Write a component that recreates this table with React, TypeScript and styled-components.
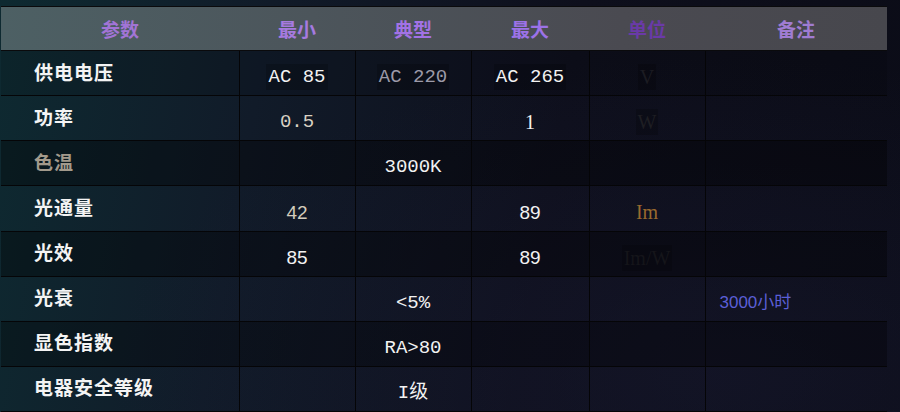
import React from "react";
import styled, { createGlobalStyle } from "styled-components";

const Global = createGlobalStyle`
  html, body { margin: 0; padding: 0; }
  body {
    width: 900px;
    height: 412px;
    overflow: hidden;
    background: linear-gradient(100deg, #0e2a31 0%, #111b29 28%, #0e0f1c 60%, #0b0c17 100%);
  }
`;

const Page = styled.div`
  width: 900px;
  height: 412px;
  padding: 6px 0 0 1px;
  box-sizing: border-box;
  display: flex;
  background: radial-gradient(ellipse at 80% 90%, rgba(30, 32, 60, 0.35), transparent 60%);
`;

const Table = styled.table`
  width: 886px;
  border-collapse: collapse;
  table-layout: fixed;
  font-family: "Noto Sans CJK SC", sans-serif;
`;

const Col = styled.col<{ $w: number }>`
  width: ${(p) => p.$w}px;
`;

const HeadRow = styled.tr`
  height: 44px;
  background: linear-gradient(90deg, #4d6064 0%, #4c555b 35%, #4a4a51 70%, #47474d 100%);
`;

const Th = styled.th<{ $c: string }>`
  border: 1px solid #0a0a0c;
  border-left: none;
  border-right: none;
  color: ${(p) => p.$c};
  font-size: 19px;
  font-weight: 700;
  text-align: center;
  padding: 0;
  line-height: 1;
`;

const Row = styled.tr<{ $dark: number }>`
  height: 44px;
  background: ${(p) => `rgba(0,0,0,${p.$dark})`};
`;

const Label = styled.td<{ $c?: string }>`
  border: 1px solid #050507;
  border-left: none;
  color: ${(p) => p.$c || "#f4f4f4"};
  font-size: 19px;
  font-weight: 700;
  padding: 0 0 4px 33px;
  letter-spacing: 1px;
  line-height: 1;
`;

const Cell = styled.td`
  border: 1px solid #050507;
  text-align: center;
  padding: 8px 0 0 0;
  line-height: 1;
`;

const NoteCell = styled.td`
  border: 1px solid #050507;
  border-right: none;
  text-align: left;
  padding: 6px 0 0 14px;
  line-height: 1;
`;

const Val = styled.span<{ $c?: string; $f?: "mono" | "sans" | "serif"; $bg?: boolean }>`
  color: ${(p) => p.$c || "#f2f2f2"};
  font-family: ${(p) =>
    p.$f === "sans"
      ? '"Liberation Sans", sans-serif'
      : p.$f === "serif"
      ? '"Liberation Serif", serif'
      : '"Liberation Mono", "Noto Sans CJK SC", monospace'};
  font-size: ${(p) => (p.$f === "sans" ? "19px" : p.$f === "serif" ? "20px" : "19px")};
  padding: 2px 2px;
  background: ${(p) => (p.$bg ? "rgba(0,0,0,0.18)" : "transparent")};
`;

const Note = styled.span`
  color: #5b5fd6;
  font-family: "Liberation Sans", "Noto Sans CJK SC", sans-serif;
  font-size: 17px;
`;

const widths = [238, 116, 116, 118, 116, 182];

const heads: [string, string][] = [
  ["参数", "#a274d6"],
  ["最小", "#a67ae0"],
  ["典型", "#a272e6"],
  ["最大", "#9c72e8"],
  ["单位", "#6a3aa8"],
  ["备注", "#a07cd2"],
];

type V = { t: string; c?: string; f?: "mono" | "sans" | "serif"; bg?: boolean } | null;

const rows: { label: string; lc?: string; dark: number; vals: V[] }[] = [
  {
    label: "供电电压",
    dark: 0.12,
    vals: [
      { t: "AC 85", bg: true },
      { t: "AC 220", c: "#9c9aa8", bg: true },
      { t: "AC 265", bg: true },
      { t: "V", c: "#1c1c22", f: "serif", bg: true },
    ],
  },
  {
    label: "功率",
    dark: 0,
    vals: [
      { t: "0.5", c: "#d9d1c3" },
      null,
      { t: "1", f: "serif" },
      { t: "W", c: "#1e1e23", f: "serif", bg: true },
    ],
  },
  {
    label: "色温",
    lc: "#a29a8c",
    dark: 0.35,
    vals: [null, { t: "3000K" }, null, null],
  },
  {
    label: "光通量",
    dark: 0,
    vals: [
      { t: "42", c: "#d4ccbc", f: "sans" },
      null,
      { t: "89", f: "sans" },
      { t: "Im", c: "#9a6a2e", f: "serif" },
    ],
  },
  {
    label: "光效",
    dark: 0.35,
    vals: [{ t: "85", f: "sans" }, null, { t: "89", f: "sans" }, { t: "Im/W", c: "#15151a", f: "serif", bg: true }],
  },
  {
    label: "光衰",
    dark: 0,
    vals: [null, { t: "<5%" }, null, null],
  },
  {
    label: "显色指数",
    dark: 0.3,
    vals: [null, { t: "RA>80" }, null, null],
  },
  {
    label: "电器安全等级",
    dark: 0,
    vals: [null, { t: "I级" }, null, null],
  },
];

export default function App() {
  return (
    <>
      <Global />
      <Page>
        <Table>
          <colgroup>
            {widths.map((w, i) => (
              <Col key={i} $w={w} />
            ))}
          </colgroup>
          <thead>
            <HeadRow>
              {heads.map(([h, c]) => (
                <Th key={h} $c={c}>
                  {h}
                </Th>
              ))}
            </HeadRow>
          </thead>
          <tbody>
            {rows.map((r, i) => (
              <Row key={r.label} $dark={r.dark}>
                <Label $c={r.lc}>{r.label}</Label>
                {r.vals.map((v, j) => (
                  <Cell key={j}>
                    {v && (
                      <Val $c={v.c} $f={v.f} $bg={v.bg}>
                        {v.t}
                      </Val>
                    )}
                  </Cell>
                ))}
                <NoteCell>{i === 5 && <Note>3000小时</Note>}</NoteCell>
              </Row>
            ))}
          </tbody>
        </Table>
      </Page>
    </>
  );
}
